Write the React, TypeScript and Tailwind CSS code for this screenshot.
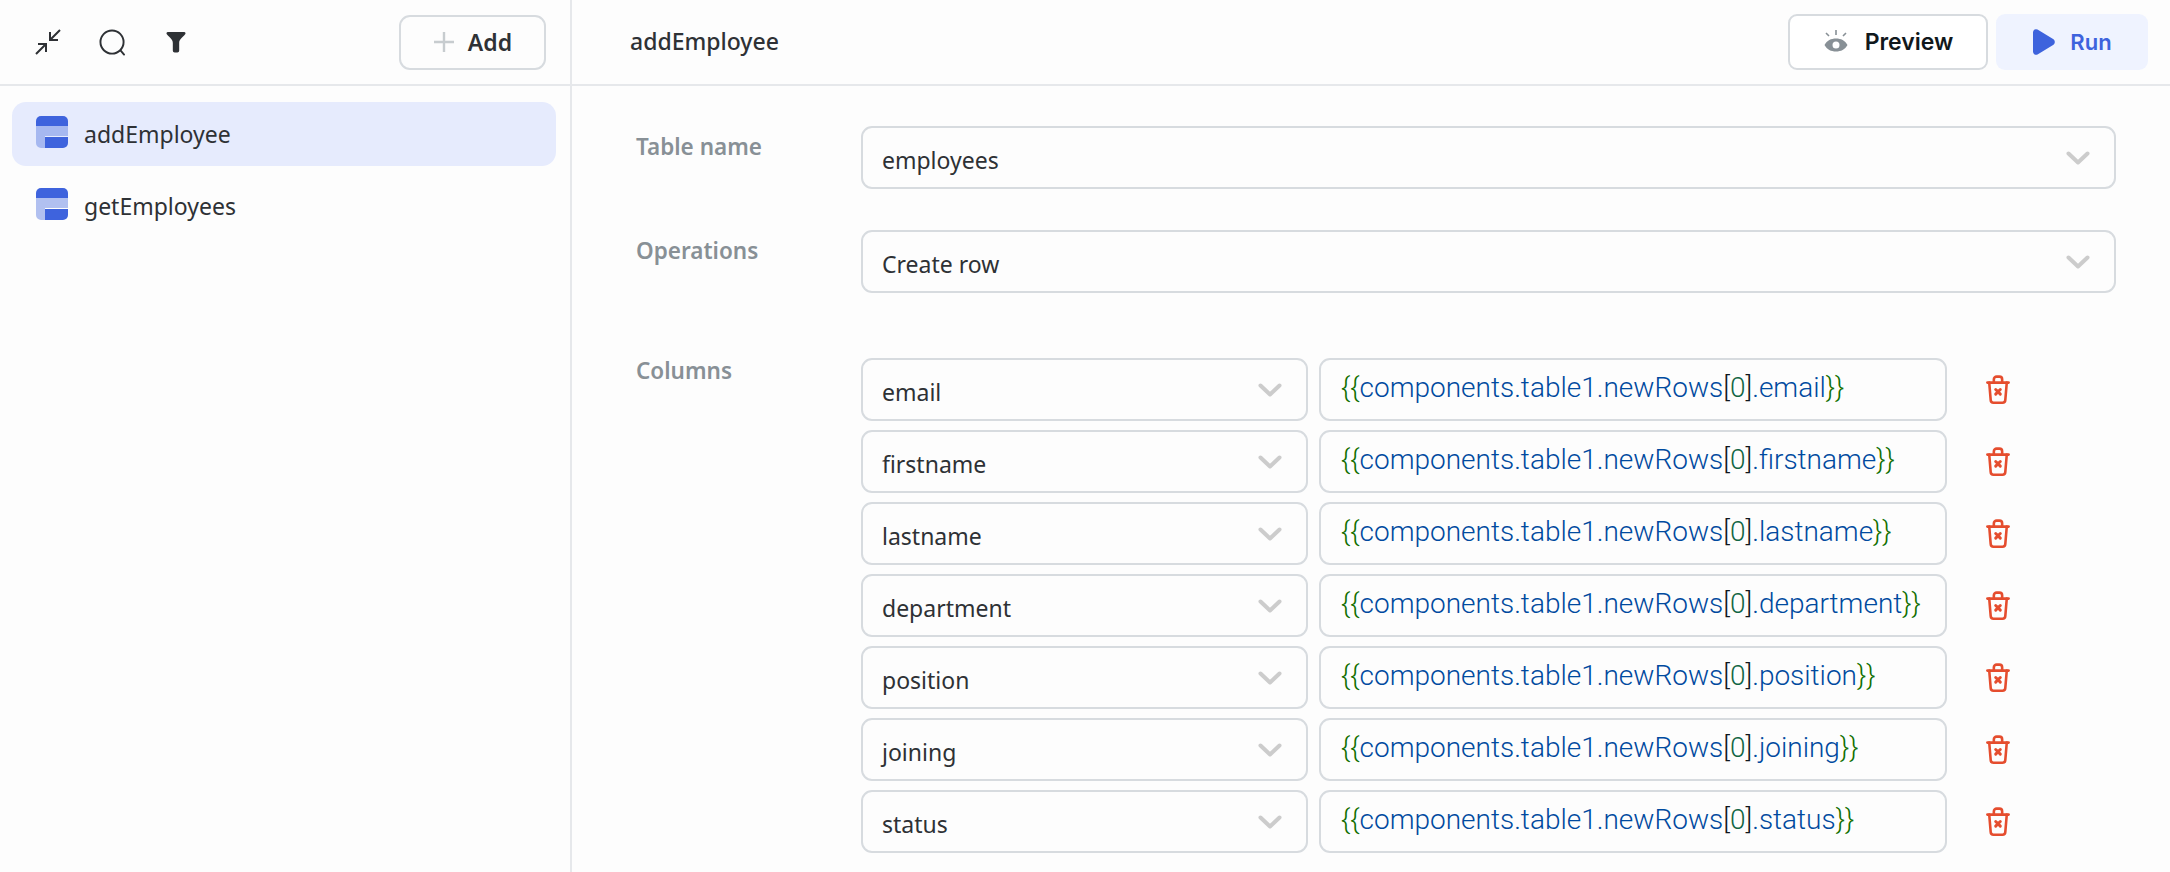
const sans = "font-['Noto_Sans',sans-serif]"

function Chevron() {
  return (
    <svg width="24" height="14" viewBox="0 0 24 14" fill="none" className="shrink-0">
      <path d="M2.500 2.500 12 11.500 21.500 2.500" stroke="#cccccc" strokeWidth="4" strokeLinecap="round" strokeLinejoin="round" />
    </svg>
  )
}

function QueryIcon({ faded }: { faded?: boolean }) {
  return (
    <svg width="32" height="32" viewBox="0 0 32 32" className="-mt-[4px] shrink-0">
      <path d="M5 0h22a5 5 0 0 1 5 5v5H0V5a5 5 0 0 1 5-5Z" fill="#3e63dd" />
      <path d="M0 10h32v10H9v12H5a5 5 0 0 1-5-5Z" fill={faded ? '#b1c0f0' : '#a6b8f0'} />
      <path d="M9 21h23v6a5 5 0 0 1-5 5H9Z" fill="#3e63dd" />
    </svg>
  )
}

function TrashIcon() {
  return (
    <svg width="24" height="30" viewBox="0 0 26 32" fill="none" stroke="#e54d2e" strokeWidth="2.800" strokeLinecap="round" strokeLinejoin="round">
      <path d="M1.500 8h23" />
      <path d="M8.500 8V4.500a3 3 0 0 1 3-3h3a3 3 0 0 1 3 3V8" />
      <path d="M3.500 8l1.600 19a3 3 0 0 0 3 2.800h9.800a3 3 0 0 0 3-2.800L22.500 8" />
      <path d="M10.500 15.500l5 5M15.500 15.500l-5 5" strokeWidth="3.200" />
    </svg>
  )
}

function Select({ value, wide }: { value: string; wide?: boolean }) {
  return (
    <div
      className={`flex h-[63px] items-center justify-between rounded-[11px] border-2 border-[#d7dbdf] pl-[19px] ${
        wide ? 'w-[1255px] pr-[24px]' : 'w-[447px] pr-[24px]'
      }`}
    >
      <span className={`${sans} pt-[6px] text-[23px] text-[#2e3135]`}>{value}</span>
      <Chevron />
    </div>
  )
}

function CodeInput({ field }: { field: string }) {
  return (
    <div className="flex h-[63px] w-[628px] items-start rounded-[11px] border-2 border-[#d7dbdf] pl-[20px] pt-[10px] font-['Roboto',sans-serif] text-[28px] font-light leading-[36px] whitespace-nowrap">
      <span className="text-[#116f00]">{'{{'}</span>
      <span className="text-[#004a9f]">components.table1.newRows</span>
      <span className="text-[#11181c]">[</span>
      <span className="text-[#116644]">0</span>
      <span className="text-[#11181c]">]</span>
      <span className="text-[#004a9f]">.{field}</span>
      <span className="text-[#116f00]">{'}}'}</span>
    </div>
  )
}

const columns = ['email', 'firstname', 'lastname', 'department', 'position', 'joining', 'status']

export default function App() {
  return (
    <div className={`${sans} flex h-[872px] w-[2170px] overflow-hidden bg-[#fdfdfd]`}>
      <aside className="w-[572px] shrink-0 border-r-2 border-[#e6e8eb]">
        <div className="flex h-[86px] items-center border-b-2 border-[#e6e8eb] pl-[34px] pr-[24px]">
          <svg width="28" height="28" viewBox="0 0 28 28" fill="none" stroke="#2e3135" strokeWidth="2" className="shrink-0">
            <path d="M26 2 16 12M16 4v8h8M2 26l10-10M4 16h8v8" />
          </svg>
          <svg width="27" height="27" viewBox="0 0 28 28" fill="none" stroke="#2e3135" strokeWidth="2" strokeLinecap="round" className="ml-[37px] shrink-0">
            <circle cx="13.500" cy="13.500" r="12" />
            <path d="M22.500 22.500 26 26.500" />
          </svg>
          <svg width="20" height="22" viewBox="0 0 22 24" className="ml-[40px] shrink-0">
            <path d="M2 1h18a1.500 1.500 0 0 1 1.100 2.500C18 7 14.500 9 14.500 13v8.500a2 2 0 0 1-2 2h-3a2 2 0 0 1-2-2V13C7.500 9 4 7 .9 3.500A1.500 1.500 0 0 1 2 1Z" fill="#2e3135" />
          </svg>
          <button className="ml-auto flex h-[55px] w-[147px] items-center justify-center gap-[13px] rounded-[11px] border-2 border-[#d7dbdf]">
            <svg width="22" height="22" viewBox="0 0 22 22" stroke="#c7cccf" strokeWidth="2.400">
              <path d="M11 1v20M1 11h20" />
            </svg>
            <span className="text-[23px] font-semibold text-[#2e3135]">Add</span>
          </button>
        </div>
        <div className="flex flex-col gap-[8px] pl-[12px] pr-[14px] pt-[16px]">
          <div className="flex h-[64px] items-center gap-[16px] rounded-[14px] bg-[#e6ebfd] pl-[24px]">
            <QueryIcon />
            <span className="text-[23px] text-[#2e3135]">addEmployee</span>
          </div>
          <div className="flex h-[64px] items-center gap-[16px] pl-[24px]">
            <QueryIcon faded />
            <span className="text-[23px] text-[#2e3135]">getEmployees</span>
          </div>
        </div>
      </aside>

      <main className="flex min-w-0 flex-1 flex-col">
        <div className="flex h-[86px] items-center border-b-2 border-[#e6e8eb] pl-[58px] pr-[22px]">
          <span className="-mt-[2px] text-[23px] font-medium text-[#2e3135]">addEmployee</span>
          <button className="ml-auto flex h-[56px] w-[200px] items-center justify-center gap-[16px] rounded-[9px] border-2 border-[#d7dbdf] bg-white font-['Inter',sans-serif]">
            <svg width="26" height="26" viewBox="0 0 26 26" fill="#889096">
              <path d="M1.500 16C4 11.500 8 9.500 13 9.500S22 11.500 24.500 16C22 20.500 18 22.500 13 22.500S4 20.500 1.500 16ZM13 12.500a3.500 3.500 0 1 0 0 7 3.500 3.500 0 0 0 0-7Z" fillRule="evenodd" />
              <path d="M13 1v5M3 4l3 3M23 4l-3 3" stroke="#889096" strokeWidth="1.600" />
            </svg>
            <span className="text-[23px] font-semibold text-[#11181c]">Preview</span>
          </button>
          <button className="ml-[8px] flex h-[56px] w-[152px] items-center justify-center gap-[14px] rounded-[9px] bg-[#eff3ff] font-['Inter',sans-serif]">
            <svg width="24" height="28" viewBox="0 0 24 26" preserveAspectRatio="none">
              <path d="M1 4a3 3 0 0 1 4.500-2.500L21.500 10.500a3 3 0 0 1 0 5L5.500 24.500A3 3 0 0 1 1 22Z" fill="#3e63dd" />
            </svg>
            <span className="text-[22px] font-semibold text-[#3e63dd]">Run</span>
          </button>
        </div>

        <div className="pl-[64px] pt-[40px]">
          <div className="flex">
            <label className="w-[225px] pt-[4px] text-[22.500px] font-semibold text-[#889096]">Table name</label>
            <Select value="employees" wide />
          </div>
          <div className="mt-[41px] flex">
            <label className="w-[225px] pt-[4px] text-[22.500px] font-semibold text-[#889096]">Operations</label>
            <Select value="Create row" wide />
          </div>
          <div className="mt-[65px] flex">
            <label className="-mt-[4px] w-[225px] text-[22.500px] font-semibold text-[#889096]">Columns</label>
            <div className="flex flex-col gap-[9px]">
              {columns.map(c => (
                <div className="flex items-center gap-[11px]" key={c}>
                  <Select value={c} />
                  <CodeInput field={c} />
                  <div className="ml-[28px]">
                    <TrashIcon />
                  </div>
                </div>
              ))}
            </div>
          </div>
        </div>
      </main>
    </div>
  )
}
